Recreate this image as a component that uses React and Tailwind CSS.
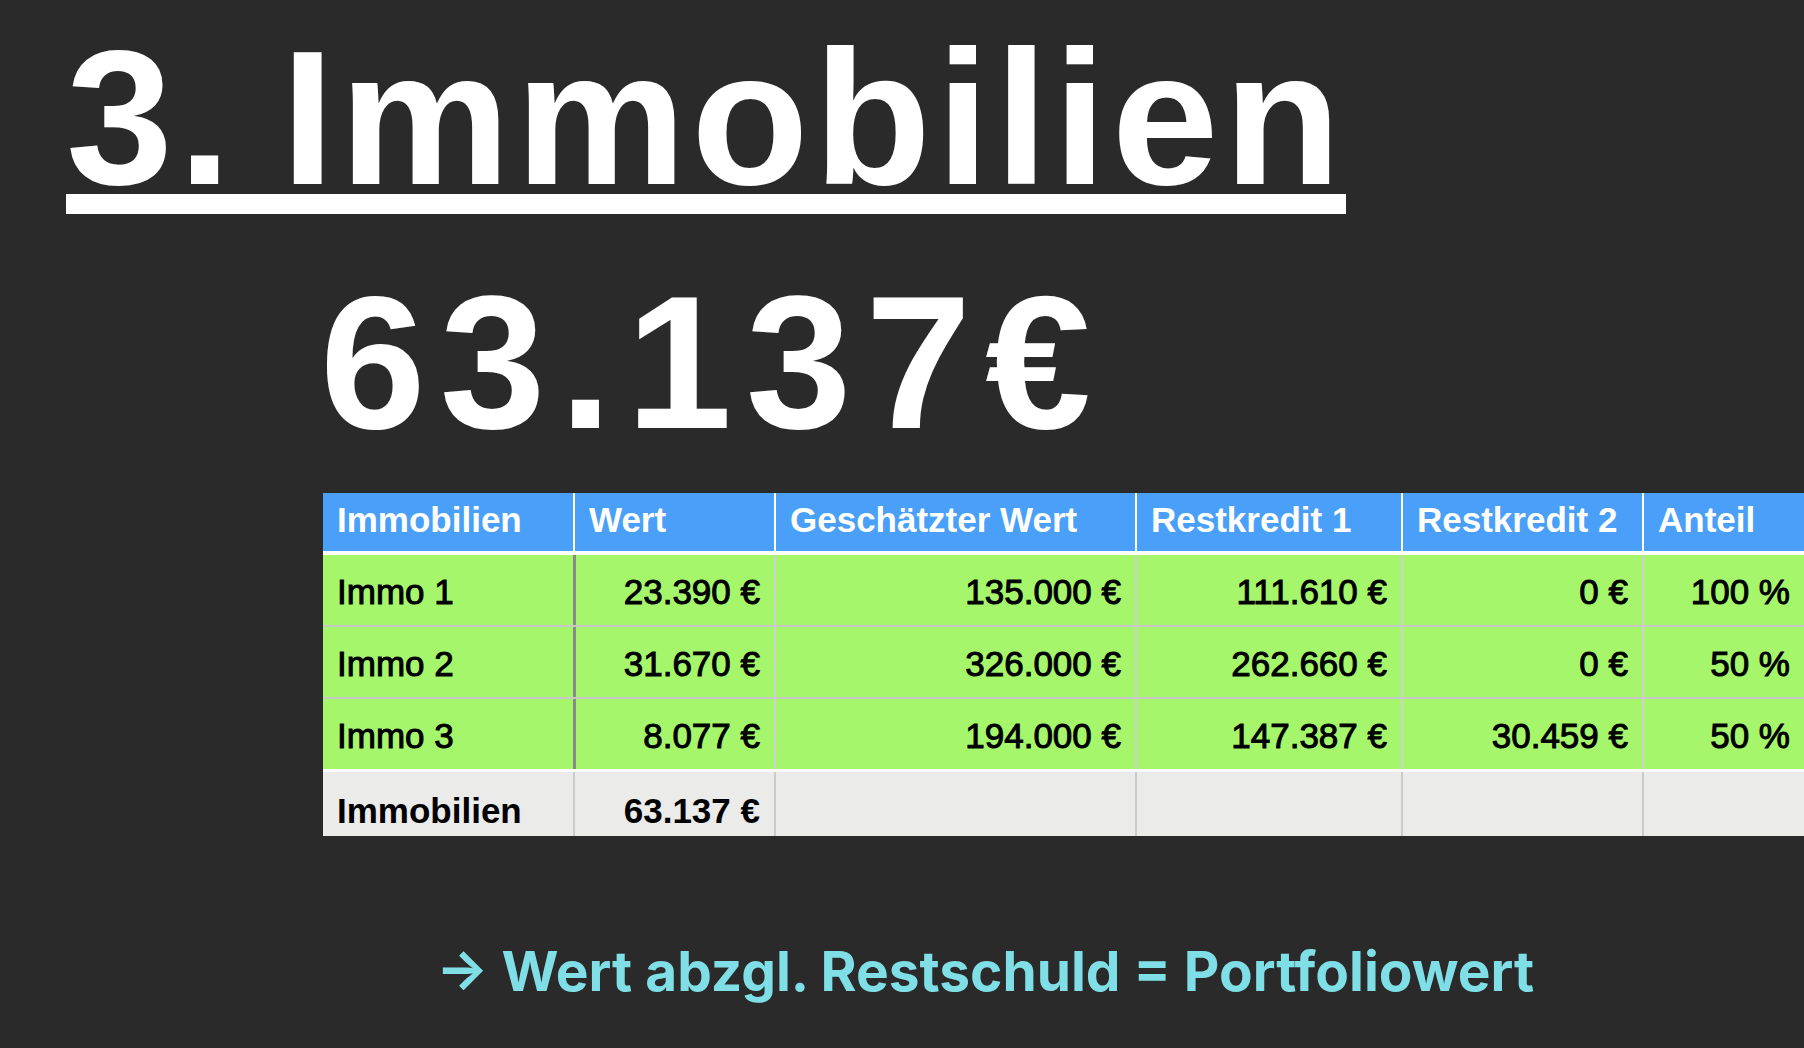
const cols = ['w-[250px]', 'w-[201px]', 'w-[361px]', 'w-[266px]', 'w-[241px]', 'w-[162px]'];

const headers = ['Immobilien', 'Wert', 'Geschätzter Wert', 'Restkredit 1', 'Restkredit 2', 'Anteil'];

const rows = [
  ['Immo 1', '23.390 €', '135.000 €', '111.610 €', '0 €', '100 %'],
  ['Immo 2', '31.670 €', '326.000 €', '262.660 €', '0 €', '50 %'],
  ['Immo 3', '8.077 €', '194.000 €', '147.387 €', '30.459 €', '50 %'],
];

const HeaderRow = () => (
  <div className="flex h-[58px] bg-[#4aa0f8] border-b-4 border-white box-content">
    {headers.map((h, i) => (
      <div
        key={h}
        className={`${cols[i]} flex items-center pb-[6px] pl-[14px] font-bold text-white ${i > 0 ? 'border-l-2 border-white' : ''}`}
      >
        {h}
      </div>
    ))}
  </div>
);

const BodyRow = ({ cells, last }) => (
  <div className={`flex bg-[#a6f66c] ${last ? 'h-[70px]' : 'h-[72px] border-b-2 border-[#c8c8c8]'}`}>
    {cells.map((c, i) => (
      <div
        key={i}
        className={`${cols[i]} flex items-center pt-[2px] text-black [-webkit-text-stroke:1px_black] ${
          i === 0 ? 'pl-[14px]' : 'justify-end pr-[14px]'
        } ${i === 1 ? 'border-l-[3px] border-[#8a8a8a]' : ''} ${i > 1 ? 'border-l-2 border-[#d0d0d0]' : ''}`}
      >
        {c}
      </div>
    ))}
  </div>
);

const FooterRow = () => (
  <div className="flex h-[64px] bg-[#ebebe9] border-t-[3px] border-white box-content">
    {cols.map((w, i) => (
      <div
        key={i}
        className={`${w} flex items-center pt-[12px] font-bold text-black ${
          i === 0 ? 'pl-[14px]' : 'justify-end pr-[14px]'
        } ${i > 0 ? 'border-l-2 border-[#cbcbcb]' : ''}`}
      >
        {i === 0 ? 'Immobilien' : i === 1 ? '63.137 €' : ''}
      </div>
    ))}
  </div>
);

export default function App() {
  return (
    <div className="w-[1804px] h-[1048px] overflow-hidden bg-[#2a2a2a] font-['Liberation_Sans',Arial,sans-serif]">
      {/* title */}
      <div className="pl-[66px] pt-[41px]">
        <div className="w-fit text-[192px] leading-[153px] tracking-[0.027em] [word-spacing:-14px] font-bold text-white border-b-[20px] border-white">
          3. Immobilien
        </div>
      </div>

      {/* total */}
      <div className="ml-[320px] mt-[53px] text-[190px] leading-none font-bold tracking-[14px] text-white">
        63.137€
      </div>

      {/* table */}
      <div className="ml-[323px] mt-[36px] text-[35px] leading-none">
        <HeaderRow />
        {rows.map((r, i) => (
          <BodyRow key={r[0]} cells={r} last={i === rows.length - 1} />
        ))}
        <FooterRow />
      </div>

      {/* note */}
      <div className="ml-[436px] mt-[108px] text-[55px] leading-none font-bold text-[#7fdee6] font-['Inter',sans-serif]">
        → Wert abzgl. Restschuld = Portfoliowert
      </div>
    </div>
  );
}
